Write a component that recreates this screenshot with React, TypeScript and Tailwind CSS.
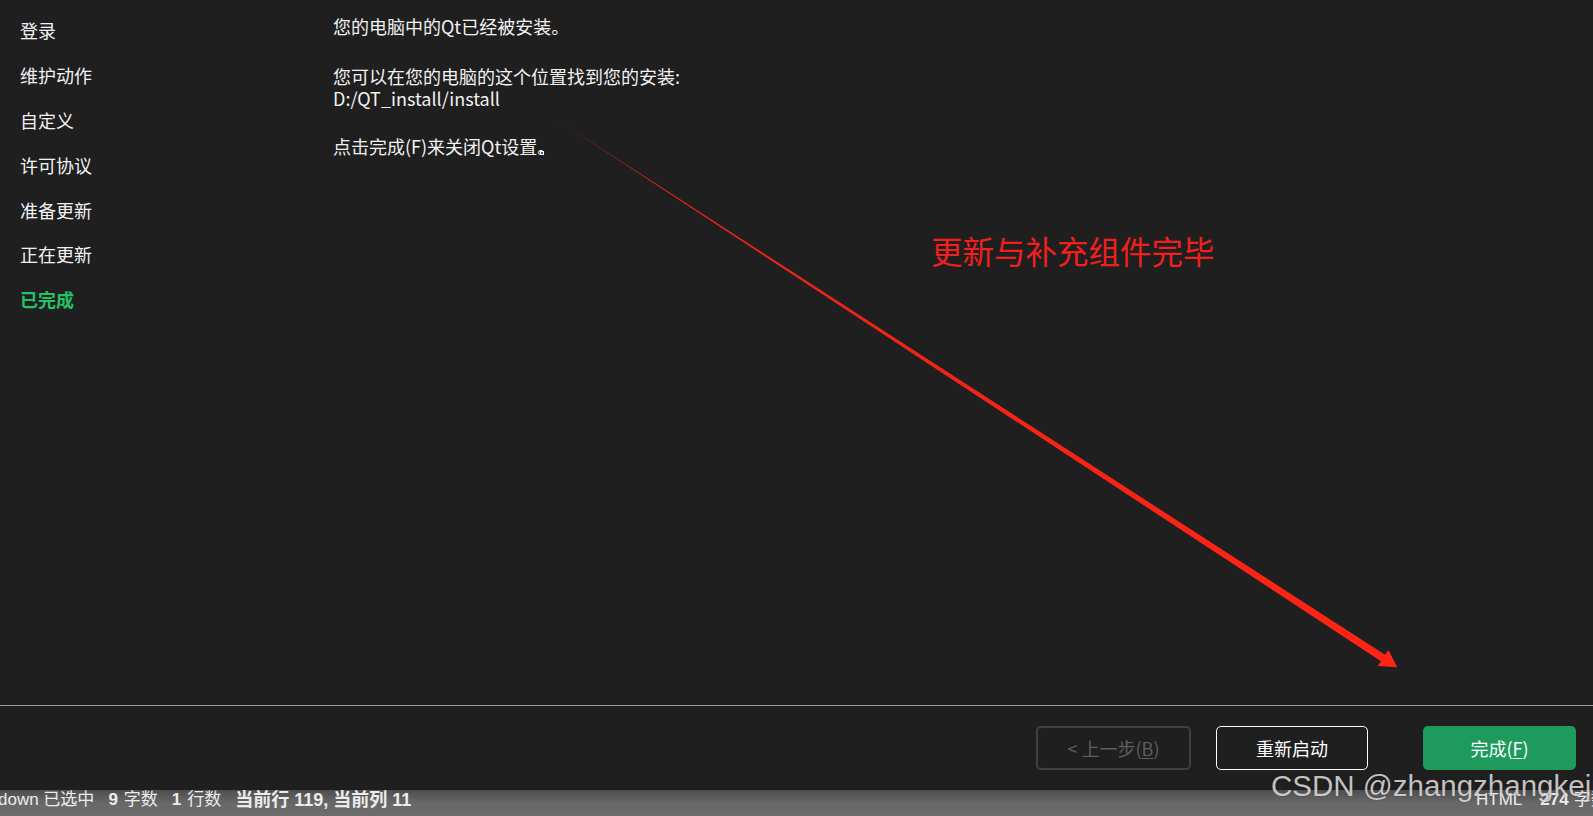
import React from "react";

const sideItems = ["登录", "维护动作", "自定义", "许可协议", "准备更新", "正在更新"];

export default function App() {
  return (
    <div className="relative w-full h-[816px] overflow-hidden bg-[#1f1f1f] text-[#f2f2f2] font-['Noto_Sans_CJK_SC',sans-serif]">
      {/* main area */}
      <div className="flex h-[705px]">
        <div className="w-[333px] shrink-0 pl-5 pt-[8px] flex flex-col">
          {sideItems.map((t) => (
            <div key={t} className="h-[44.8px] flex items-center text-[18px] leading-none">
              {t}
            </div>
          ))}
          <div className="h-[44.8px] flex items-center text-[18px] leading-none font-bold text-[#22c268]">
            已完成
          </div>
        </div>
        <div className="pt-[15px] text-[18px] leading-[22px]">
          <p>您的电脑中的Qt已经被安装。</p>
          <p className="mt-[28px]">您可以在您的电脑的这个位置找到您的安装:</p>
          <p>D:/QT_install/install</p>
          <p className="mt-[26px]">点击完成(F)来关闭Qt设置。</p>
        </div>
      </div>

      {/* separator */}
      <div className="h-px bg-[#9c9c9c]" />

      {/* button bar */}
      <div className="h-[84px] flex justify-end items-start pt-[20px] pr-[17px] text-[18px]">
        <div className="w-[155px] h-[44px] mr-[25px] rounded-[5px] border-2 border-[#404040] flex items-center justify-center text-[#5e5e5e]">
          &lt; 上一步(<span className="underline underline-offset-2">B</span>)
        </div>
        <div className="w-[152px] h-[44px] mr-[55px] rounded-[5px] border-[1.5px] border-white flex items-center justify-center text-white">
          重新启动
        </div>
        <div className="w-[153px] h-[44px] rounded-[5px] bg-[#1e9b5c] flex items-center justify-center text-white">
          完成(<span className="underline underline-offset-2">F</span>)
        </div>
      </div>

      {/* status bar */}
      <div className="h-[26px] flex items-start pt-[1px] overflow-hidden whitespace-nowrap bg-gradient-to-b from-[#4e4e4e] via-[#686868] to-[#6c6c6c] text-[#ececec] text-[17px] leading-[18px] font-['Liberation_Sans','Noto_Sans_CJK_SC',sans-serif]">
        <div className="w-[1478px] shrink-0 flex items-center -ml-[2px]">
          <span>down 已选中</span>
          <span className="ml-[14px] font-bold">9</span>
          <span className="ml-[6px]">字数</span>
          <span className="ml-[14px] font-bold">1</span>
          <span className="ml-[6px]">行数</span>
          <span className="ml-[14px] font-bold text-[18px]">当前行 119, 当前列 11</span>
        </div>
        <div className="shrink-0 flex items-center">
          <span>HTML</span>
          <span className="ml-[18px] font-bold">274</span>
          <span className="ml-[5px]">字数</span>
        </div>
      </div>

      {/* annotation text */}
      <div className="absolute left-[931px] top-[235px] text-[31.5px] leading-none text-[#f2201d] whitespace-nowrap">
        更新与补充组件完毕
      </div>

      {/* annotation arrow */}
      <svg className="absolute left-0 top-0 pointer-events-none" width="1593" height="816" viewBox="0 0 1593 816">
        <defs>
          <linearGradient id="arrowGrad" gradientUnits="userSpaceOnUse" x1="556" y1="119" x2="1397" y2="667">
            <stop offset="0" stopColor="#ff2416" stopOpacity="0.35" />
            <stop offset="0.12" stopColor="#ff2416" stopOpacity="0.9" />
            <stop offset="1" stopColor="#ff2416" stopOpacity="1" />
          </linearGradient>
        </defs>
        <polygon
          points="556,119 1385,654.8 1388.3,650 1397.3,667.3 1377.7,666 1381,661.2"
          fill="url(#arrowGrad)"
        />
        <rect x="540" y="151" width="4" height="4" fill="#ffffff" />
        <rect x="541" y="152" width="2" height="2" fill="#1e6fd0" />
      </svg>

      {/* watermark */}
      <div className="absolute left-[1271px] top-[771px] text-[29.5px] leading-[30px] whitespace-nowrap text-white/75 font-['Liberation_Sans',sans-serif] [text-shadow:0_0_1px_rgba(0,0,0,0.6)]">
        CSDN @zhangzhangkeji
      </div>
    </div>
  );
}
